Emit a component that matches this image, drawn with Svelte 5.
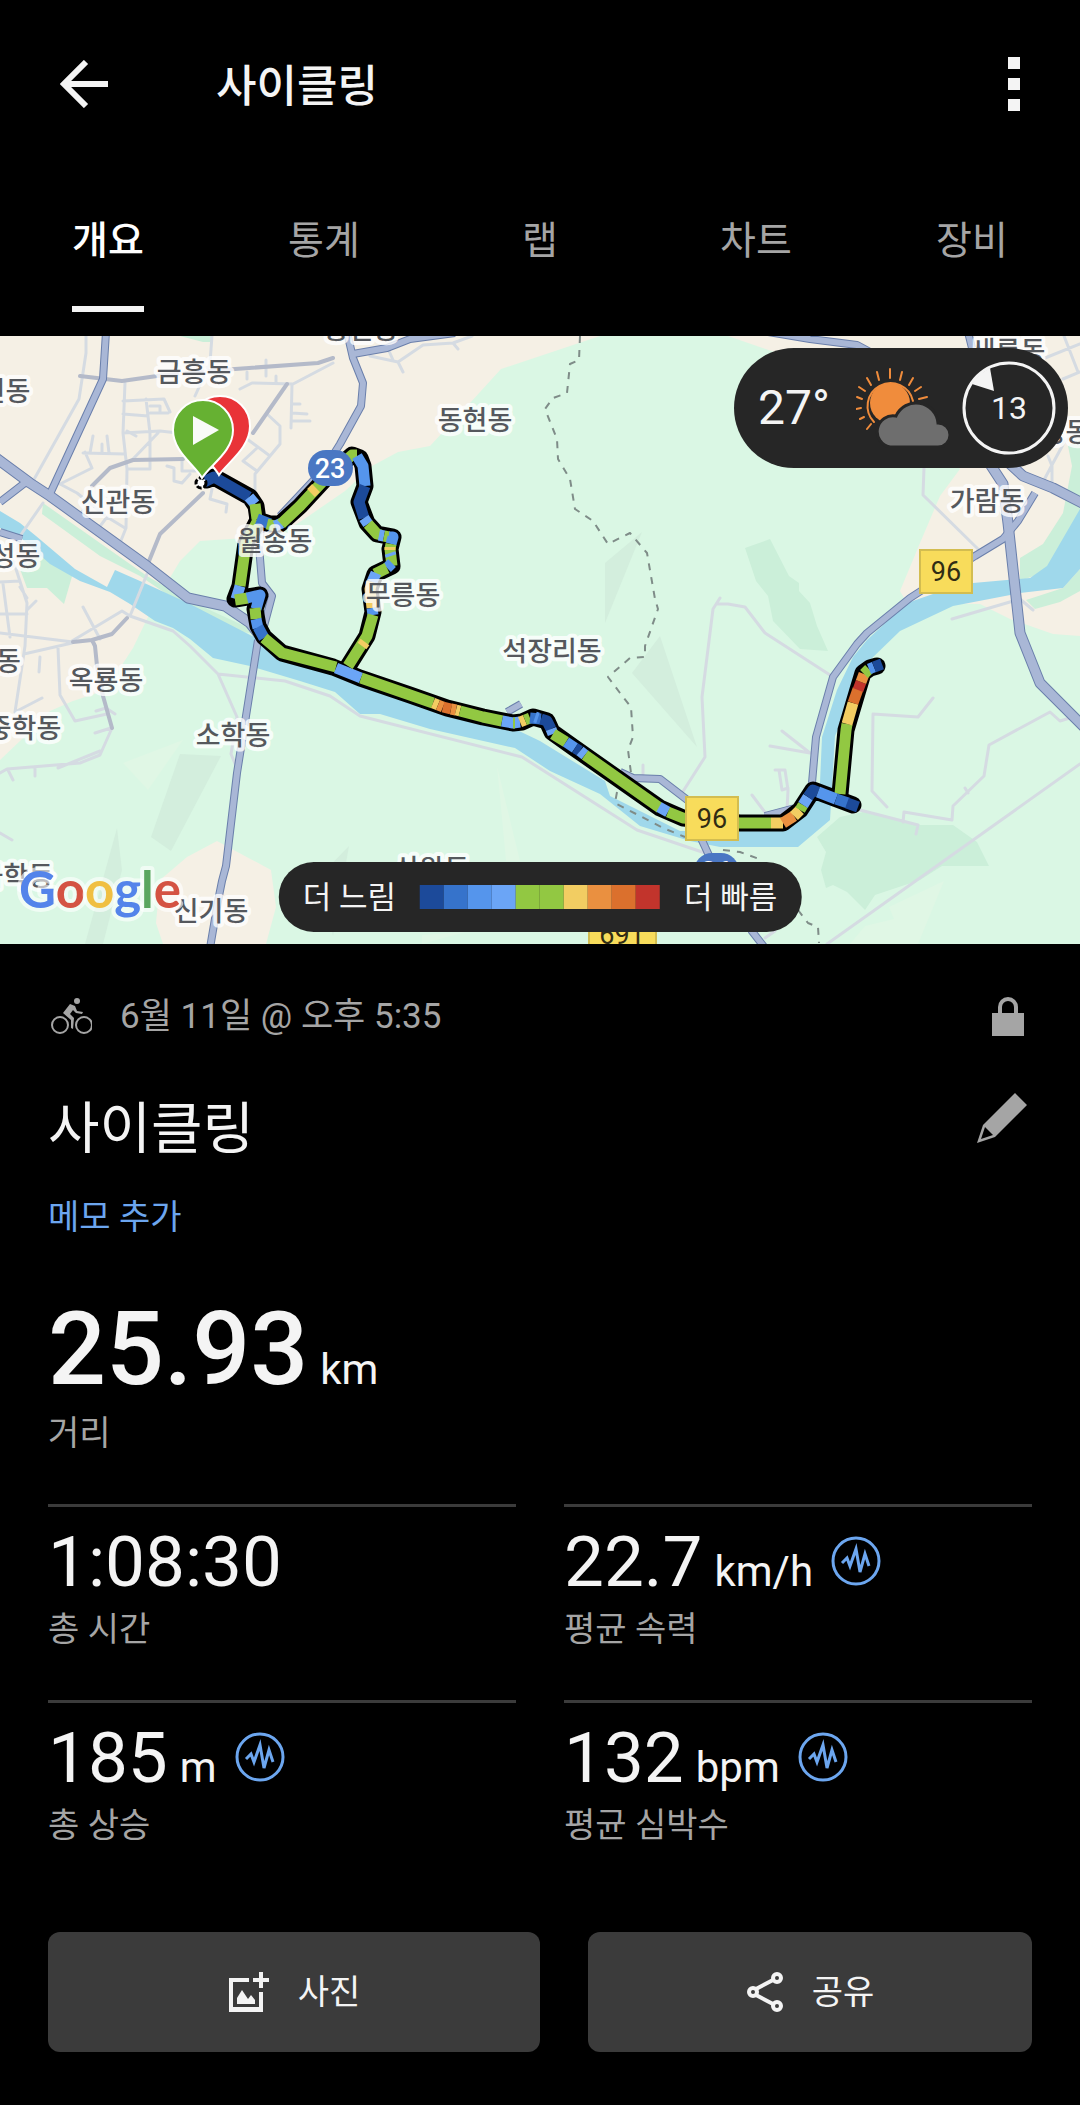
<script lang="ts">
  type Segment = { color: string; d: string };
  type Place = { name: string; x: number; y: number };
  type Stat = { value: string; unit: string; label: string; insight: boolean };

  const tabs = ["개요", "통계", "랩", "차트", "장비"];
  let activeTab = $state("개요");

  const navy = "#1c4a9a";
  const blue = "#3673cb";
  const sky = "#5595ec";
  const light = "#6ba5f6";
  const green = "#92c842";
  const yellow = "#f2cd62";
  const orange = "#ea9040";
  const rust = "#db702d";
  const red = "#c2342c";

  const paceScale = [navy, blue, sky, light, green, green, yellow, orange, rust, red];

  const routeLines = [
    "M207 144 L214 141 L250 161 L256 170 L258 184 L270 188 L280 188 L300 170 L325 143 L352 119 L360 122 L363 130 L365 150 L359 166 L367 187 L377 198 L393 201 L390 213 L392 230 L375 238 L370 253 L373 276 L367 300 L347 332",
    "M258 184 L246 207 L240 250 L235 263 L260 259 L255 273 L258 290 L264 301 L282 317 L333 331 L360 342 L410 359 L447 372 L483 381 L513 387 L522 386 L533 381 L547 385 L552 396 L573 411 L660 472 L683 482 L740 487 L783 487 L800 474 L813 454 L853 469",
    "M840 458 L846 394 L857 357 L863 337 L870 332 L877 330",
  ];

  const segments: Segment[] = [
    { color: green, d: "M258 184 L246 207 L240 250" },
    { color: light, d: "M240 250 L236 263" },
    { color: green, d: "M235 264 L248 262" },
    { color: sky, d: "M247 262 L260 259 L256 273" },
    { color: green, d: "M255 272 L256 283" },
    { color: sky, d: "M256 283 L258 292" },
    { color: blue, d: "M258 291 L264 302" },
    { color: green, d: "M264 302 L282 317 L336 331" },
    { color: light, d: "M336 332 L361 342" },
    { color: green, d: "M361 342 L410 359 L433 367" },
    { color: yellow, d: "M433 367 L438 369" },
    { color: orange, d: "M438 369 L443 371" },
    { color: rust, d: "M443 371 L451 373" },
    { color: orange, d: "M451 373 L456 374" },
    { color: yellow, d: "M456 374 L460 375" },
    { color: green, d: "M460 375 L483 381 L502 385" },
    { color: light, d: "M502 385 L513 387 L520 386" },
    { color: green, d: "M513 387 L515 387" },
    { color: yellow, d: "M520 386 L525 384" },
    { color: green, d: "M525 384 L530 382" },
    { color: blue, d: "M530 382 L541 383" },
    { color: sky, d: "M535 381 L538 382" },
    { color: navy, d: "M541 383 L547 385 L551 393" },
    { color: light, d: "M551 393 L553 398" },
    { color: green, d: "M553 398 L566 406" },
    { color: sky, d: "M566 406 L575 412" },
    { color: navy, d: "M575 412 L580 415" },
    { color: light, d: "M580 415 L585 419" },
    { color: green, d: "M585 419 L660 472" },
    { color: light, d: "M659 471 L668 476" },
    { color: green, d: "M668 476 L683 482 L740 487 L771 487" },
    { color: yellow, d: "M771 487 L783 487" },
    { color: orange, d: "M783 487 L794 480" },
    { color: yellow, d: "M794 480 L800 474" },
    { color: green, d: "M800 474 L803 469" },
    { color: light, d: "M803 469 L808 461" },
    { color: navy, d: "M808 461 L813 454 L818 456" },
    { color: green, d: "M840 458 L846 394 L847 388" },
    { color: yellow, d: "M847 388 L853 367" },
    { color: rust, d: "M853 367 L858 353" },
    { color: red, d: "M858 354 L861 346" },
    { color: orange, d: "M861 346 L864 338" },
    { color: green, d: "M864 338 L869 333" },
    { color: sky, d: "M869 333 L874 331" },
    { color: navy, d: "M874 331 L882 328" },
    { color: sky, d: "M818 456 L836 463" },
    { color: blue, d: "M836 463 L848 467" },
    { color: navy, d: "M847 467 L858 471" },
    { color: navy, d: "M204 146 L214 141 L249 161" },
    { color: light, d: "M249 161 L255 168" },
    { color: green, d: "M255 168 L257 183" },
    { color: blue, d: "M257 183 L270 188" },
    { color: green, d: "M267 188 L275 190" },
    { color: light, d: "M275 190 L282 187" },
    { color: green, d: "M281 188 L300 170 L325 143 L352 119 L357 119" },
    { color: yellow, d: "M311 157 L316 152" },
    { color: sky, d: "M357 120 L363 130 L365 150" },
    { color: navy, d: "M365 150 L359 166 L364 182" },
    { color: light, d: "M364 182 L368 188" },
    { color: green, d: "M368 188 L377 198 L381 199" },
    { color: light, d: "M379 199 L384 200" },
    { color: green, d: "M384 200 L389 201" },
    { color: sky, d: "M389 201 L393 201 L391 208" },
    { color: green, d: "M391 208 L390 213 L392 230" },
    { color: yellow, d: "M390 211 L390 214" },
    { color: light, d: "M390 217 L391 220" },
    { color: sky, d: "M392 227 L387 232" },
    { color: green, d: "M387 232 L375 238" },
    { color: light, d: "M376 237 L372 246" },
    { color: yellow, d: "M372 246 L370 253 L372 272" },
    { color: sky, d: "M372 272 L373 279" },
    { color: green, d: "M373 279 L367 300 L348 330" },
    { color: yellow, d: "M365 306 L362 310" },
  ];

  const places: Place[] = [
    { name: "금흥동", x: 194, y: 46 },
    { name: "쌍신동", x: -7, y: 65 },
    { name: "신관동", x: 118, y: 176 },
    { name: "산성동", x: 3, y: 230 },
    { name: "월송동", x: 275, y: 215 },
    { name: "송선동", x: 361, y: 3 },
    { name: "동현동", x: 475, y: 94 },
    { name: "무릉동", x: 403, y: 269 },
    { name: "석장리동", x: 552, y: 325 },
    { name: "새롬동", x: 1008, y: 25 },
    { name: "나성동", x: 1053, y: 106 },
    { name: "가람동", x: 987, y: 175 },
    { name: "교동", x: -4, y: 335 },
    { name: "옥룡동", x: 106, y: 354 },
    { name: "중학동", x: 24, y: 402 },
    { name: "소학동", x: 233, y: 409 },
    { name: "금학동", x: 16, y: 550 },
    { name: "신기동", x: 211, y: 585 },
    { name: "상왕동", x: 432, y: 543 },
  ];

  const minorRoads =
    "M86 0V17L79 63L32 147M43 167L20 200L13 230M125 47L123 97L127 133L126 192L120 207" +
    "M212 0L210 27L195 60M123 65L164 63L170 76M150 77H168M123 78L148 80M146 63L150 97V133L127 133" +
    "M123 97L160 95L178 97M158 97L133 123M127 95L136 100M150 70H160V77M93 100L90 117H83L125 118" +
    "M102 108V117M107 100L109 117M85 116L92 132L60 148L77 157L107 181L98 193M107 181L125 192" +
    "M88 170L77 180M240 53L252 47L293 48L333 27M292 48L291 92M292 68H300M292 77L307 78M291 85H310" +
    "M247 36V43M266 24V40M276 40V47M267 78L280 90V108L255 138V155M247 103L270 120M257 112L243 125L257 135" +
    "M212 153L210 163L227 168L226 176M167 130L174 132V145L182 147L190 138M182 123V135H195" +
    "M147 238L130 280L122 275L72 305M130 280L173 295L190 310L218 338L285 345L330 360L360 380L522 421L637 494L708 518" +
    "M83 271L100 303M15 230L27 267L25 310L15 376L42 362M0 297L73 306M0 278H27M0 246L20 245M3 248L10 301" +
    "M27 274L36 265M20 251L27 262M24 318L72 307M58 312L60 359L75 385L107 378M96 375L106 372L115 378M95 397L111 392" +
    "M112 392L100 419L80 427L7 433L0 437M58 432L100 415M8 434L13 444M35 432V440M40 321L39 336M0 497L12 504" +
    "M218 338L237 381L231 418L236 430M370 20L398 26L423 9L453 7L472 0M453 7L458 13M398 26L403 36M389 15L393 24" +
    "M720 262L713 273L702 361L705 421L682 457M643 429V441M718 268H728L745 271L765 297L830 339" +
    "M924 132L923 159L978 213M1045 22L1080 8M1064 0L1078 36M1063 43L1080 36M1080 95L1065 105L1053 127L1043 146" +
    "M1048 120L1052 130V150M952 283L1020 263L1033 274M782 395L810 417L770 410M775 434H785L788 454L787 474" +
    "M779 434L782 454L788 452M752 459L767 479M933 362L918 381L873 378L872 455L887 471" +
    "M860 474L918 489L916 498M903 486L904 476L952 484L953 470L984 440L989 409L1050 376L1060 385L1073 381" +
    "M965 452L968 457M1080 428L827 608M765 602L775 595";

  const streets =
    "M80 40L122 45L157 40L235 33L318 27L333 22M92 150L110 132L133 124L183 123M203 157L160 198L147 230" +
    "M287 48L253 97M127 282L112 298L92 304L95 310L97 330L103 360L112 392M73 306L92 304";

  const highways =
    "M106 -4L103 43L49 160M0 166L30 143M0 196L22 203M353 18L387 12L410 3L455 -3" +
    "M347 -4L353 22L363 47L361 70L340 108L325 132L280 180M261 190L259 210L262 247L272 260L264 290" +
    "M258 304L237 437L226 530L222 545L218 565L210 612" +
    "M812 447L816 401L833 341L857 308L867 297L910 262L975 220L1003 203L1018 185L1035 157" +
    "M768 -4L810 3L857 9L870 16M968 -4L972 12M507 376L521 368M620 436L633 442L660 443L690 466" +
    "M700 500L712 526M751 594L765 612M765 480L795 472";

  const trunkRoads =
    "M-4 122L30 147L50 160L147 230L188 262L225 270L250 287L264 305" +
    "M990 128L1003 148L1008 187L1013 233L1020 297L1040 347L1084 391M1010 128L1023 140L1053 152L1084 168";

  const boundary =
    "M580 0L579 24L570 28L567 57L553 62L545 73L557 103L558 123L570 143L575 173L593 185L608 208L630 197" +
    "L647 217L655 263L658 273L645 310V321L630 322L608 341L620 357L631 371L633 401L628 414L631 437" +
    "M617 456L615 467L663 492L685 501M723 514L740 516L762 524M798 574L808 587L818 591L819 607";

  const stats: Stat[] = [
    { value: "1:08:30", unit: "", label: "총 시간", insight: false },
    { value: "22.7", unit: "km/h", label: "평균 속력", insight: true },
    { value: "185", unit: "m", label: "총 상승", insight: true },
    { value: "132", unit: "bpm", label: "평균 심박수", insight: true },
  ];
</script>

<main class="activity">
  <header class="app-bar">
    <button class="icon-btn" aria-label="뒤로">
      <svg width="48" height="48" viewBox="0 0 48 48" fill="none" stroke="#f4f4f4" stroke-width="6">
        <path d="M26 2 4 24l22 22M4 24h44" />
      </svg>
    </button>
    <h1>사이클링</h1>
    <button class="icon-btn menu-btn" aria-label="메뉴">
      <svg width="12" height="54" viewBox="0 0 12 54" fill="#f4f4f4">
        <path d="M0 0h12v12H0zM0 21h12v12H0zM0 42h12v12H0z" />
      </svg>
    </button>
  </header>

  <nav class="tabs">
    {#each tabs as tab}
      <button class="tab" class:active={tab === activeTab} onclick={() => (activeTab = tab)}>
        <span>{tab}</span>
      </button>
    {/each}
  </nav>

  <section class="map">
    <svg class="map-canvas" viewBox="0 0 1080 608" preserveAspectRatio="xMidYMid slice">
      <rect width="1080" height="608" fill="#daf7e4" />

      <!-- built-up land -->
      <g fill="#f5f0e5">
        <path d="M0 0H600L501 33L470 67L430 110L398 116L372 130L345 155L300 186L275 200L200 205L180 225L168 245L160 262L147 283L133 312L118 335L100 356L73 365L50 375L20 405L0 424Z" />
        <path d="M728 0L780 18L900 60L960 133L940 160L920 207L900 255L907 267L980 268L1010 283L1053 298L1080 300V0Z" />
        <path d="M217 505L271 534L276 571L266 608H163L156 587L160 544L187 521Z" />
      </g>

      <!-- parks and hills -->
      <g fill="#cbefd9">
        <path d="M43 167L147 240L190 265L262 298L240 296L165 257L140 240L100 220L42 178Z" />
        <path d="M20 233L43 217L73 237L64 268L47 252H27Z" />
        <path d="M745 212L770 203L789 240L799 247V255L810 267L817 290L828 315L800 313L773 285L768 260L756 245Z" />
        <path d="M817 501L840 481L863 476L920 489H953L977 506L989 530H942L920 544L875 559L865 574L847 556L833 549L826 552L821 534L826 516Z" />
        <path d="M1080 103L1068 110L1072 130L1063 177L1043 208L1020 222V245L1047 235L1080 180Z" />
        <path d="M1080 233L1063 252L1026 264L1035 273L1060 266L1080 255Z" />
        <path d="M180 0H211V6H203Z" />
      </g>
      <g fill="#d3eedd">
        <path d="M180 418L221 420L171 515L151 501Z" />
        <path d="M117 492L122 534L103 608H85Z" />
        <path d="M605 227L642 196L605 287Z" />
        <path d="M660 300L632 337L697 411Z" />
        <path d="M349 510L320 540L333 600Z" />
      </g>
      <g fill="#e0f7e5">
        <path d="M123 427L183 404L148 454Z" />
        <path d="M497 430L520 525H506Z" />
        <path d="M944 545L889 571L894 583L865 590L850 608H918Z" />
        <path d="M422 599L465 596L422 608Z" />
      </g>

      <!-- river -->
      <path
        fill="#9fd8eb"
        d="M0 175L20 187L36 200L75 233L107 251L115 234L140 245L190 268L252 300L360 345L450 375L517 394L540 405L605 445L610 460L650 480L680 495H760L800 478L820 447L822 401L837 354L853 321L867 304L907 267L933 258L973 247L1030 242L1047 230L1080 173V233L1063 252L1020 257L953 270L900 295L867 327L835 400L830 484L798 511H720L690 505L640 490L600 458L550 435L515 412L430 393L380 378H360L335 356L300 345L250 330L213 322L190 303L173 292L155 285L130 268L110 256L80 245L50 228L22 203L0 192Z"
      />

      <g fill="none" stroke-linejoin="round">
        <path d={minorRoads} stroke="#d5dbe2" stroke-width="3" stroke-linecap="round" />
        <path d={streets} stroke="#b4bac9" stroke-width="4" stroke-linecap="round" />
        <path d={highways} stroke="#6a7fab" stroke-width="8" />
        <path d={trunkRoads} stroke="#6a7fab" stroke-width="11" />
        <path d={highways} stroke="#a9b7d6" stroke-width="6" />
        <path d={trunkRoads} stroke="#a9b7d6" stroke-width="9" />
        <path d={boundary} stroke="#7f8c88" stroke-width="2" stroke-dasharray="7 7" />
      </g>

      <!-- recorded track -->
      <g fill="none" stroke-linejoin="round">
        {#each routeLines as d}
          <path {d} stroke="#000000" stroke-width="17" stroke-linecap="round" />
        {/each}
        {#each segments as segment}
          <path d={segment.d} stroke={segment.color} stroke-width="11" />
        {/each}
      </g>

      <g class="place-names">
        {#each places as place}
          <text x={place.x} y={place.y}>{place.name}</text>
        {/each}
      </g>

      <g class="shield-blue">
        <rect x="308" y="114" width="45" height="36" rx="18" />
        <text x="330" y="142">23</text>
        <rect x="694" y="517" width="45" height="36" rx="18" />
        <text x="716" y="545">36</text>
      </g>
      <g class="shield-yellow">
        <rect x="920" y="214" width="52" height="43" />
        <text x="946" y="245">96</text>
        <rect x="686" y="461" width="52" height="43" />
        <text x="712" y="492">96</text>
        <rect x="589" y="577" width="67" height="43" />
        <text x="622" y="608">691</text>
      </g>

      <!-- finish and start pins -->
      <circle cx="201" cy="147" r="5" fill="#ffffff" stroke="#000000" stroke-width="3" stroke-dasharray="5 2" />
      <g stroke="#ffffff" stroke-width="2">
        <path fill="#e93338" d="M219 139C212 126 190 112 190 90A30 30 0 0 1 250 90C250 112 228 126 219 139Z" />
        <path fill="#66b132" d="M202 142C195 129 173 116 173 94A30 30 0 0 1 233 94C233 116 210 129 202 142Z" />
      </g>
      <path fill="#f8fbf8" d="M193 80L219 94L193 109Z" />

      <text class="google" x="19" y="572">
        <tspan fill="#5484ea">G</tspan><tspan fill="#d45343">o</tspan><tspan fill="#f0bf42">o</tspan><tspan fill="#5484ea">g</tspan><tspan fill="#5aa65f">l</tspan><tspan fill="#d45343">e</tspan>
      </text>
    </svg>

    <div class="weather">
      <span class="temperature">27°</span>
      <svg width="94" height="80" viewBox="0 0 94 80" fill="none">
        <g stroke="#f08c3c" stroke-width="2" stroke-linecap="round">
          <path d="M34 10V1M44 12L46 4M23 12L21 4M53 17L57 10M15 17L11 10M59 23L65 19M9 23L3 19M63 31L71 29M6 31L1 29M5 40L0 41M8 49L4 51M15 56L11 61" />
          <path d="M18 54A23 23 0 1 1 57 33" />
        </g>
        <circle cx="34" cy="35" r="20" fill="#f08c3c" />
        <path
          fill="#6e6e6e"
          stroke="#262626"
          stroke-width="3"
          d="M34 79A15.500 15.500 0 1 1 40 48A22 22 0 0 1 82 55A12 12 0 0 1 82 79Z"
        />
      </svg>
      <div class="wind">
        <svg width="94" height="94" viewBox="0 0 94 94">
          <circle cx="47" cy="47" r="45" fill="none" stroke="#f4f4f4" stroke-width="3" />
          <path d="M10 23A46 46 0 0 1 28 7L32 30Z" fill="#f4f4f4" />
        </svg>
        <span>13</span>
      </div>
    </div>

    <div class="legend">
      <span>더 느림</span>
      <div class="pace-scale">
        {#each paceScale as color}
          <i style:background={color}></i>
        {/each}
      </div>
      <span>더 빠름</span>
    </div>
  </section>

  <section class="details">
    <div class="meta">
      <svg width="44" height="40" viewBox="0 0 44 40" fill="none" stroke="#a5a5a5">
        <g stroke-width="2">
          <circle cx="12" cy="29" r="8" />
          <circle cx="36" cy="29" r="8" />
        </g>
        <circle cx="29" cy="5" r="3" fill="#a5a5a5" stroke="none" />
        <path
          fill="#a5a5a5"
          stroke="none"
          d="M22 8 27 10 29 15 35 16 34 18 28 17 25 14 22 18 26 22 25 33 23 32 23 24 15 17Z"
        />
      </svg>
      <time>6월 11일 @ 오후 5:35</time>
      <button class="icon-btn" aria-label="비공개">
        <svg width="32" height="40" viewBox="0 0 32 40">
          <path d="M8 19V11a8 8 0 0 1 16 0v8" fill="none" stroke="#a5a5a5" stroke-width="4" />
          <path d="M0 17h32v23H0z" fill="#a5a5a5" />
        </svg>
      </button>
    </div>

    <div class="title-row">
      <h2>사이클링</h2>
      <button class="icon-btn" aria-label="이름 편집">
        <svg width="50" height="50" viewBox="0 0 50 50" fill="#a5a5a5">
          <path fill-rule="evenodd" d="M38 0 50 12 18 44 0 50 6 32ZM8 34 4 46 16 42Z" />
        </svg>
      </button>
    </div>

    <a class="memo" href="#memo">메모 추가</a>

    <div class="distance">
      <div class="reading">
        <strong>25.93</strong>
        <span class="unit">km</span>
      </div>
      <p class="label">거리</p>
    </div>

    <div class="stats">
      {#each stats as stat}
        <div class="stat">
          <div class="reading">
            <span class="value">{stat.value}</span>
            {#if stat.unit}
              <span class="unit">{stat.unit}</span>
            {/if}
            {#if stat.insight}
              <button class="icon-btn insight" aria-label="{stat.label} 상세">
                <svg width="50" height="50" viewBox="0 0 50 50" fill="none" stroke="#6ca6ef">
                  <circle cx="25" cy="25" r="23" stroke-width="3" />
                  <path d="M11 27 16 22 19 30 25 13 29 36 34 18 38 30" stroke-width="3" />
                </svg>
              </button>
            {/if}
          </div>
          <p class="label">{stat.label}</p>
        </div>
      {/each}
    </div>

    <div class="actions">
      <button class="action">
        <svg width="42" height="42" viewBox="0 0 42 42" fill="#f4f4f4">
          <path d="M1 7h20v4H5v25h26V21h4v20H1z" />
          <path d="M31 1h4v6h6v4h-6v6h-4v-6h-6V7h6z" />
          <path d="M9 33V27l5-8 6 9 3-4 4 5v4z" />
        </svg>
        사진
      </button>
      <button class="action">
        <svg width="38" height="42" viewBox="0 0 38 42" fill="none" stroke="#f4f4f4" stroke-width="4">
          <path d="M10 18 27 9M10 24 27 33" />
          <circle cx="31" cy="7" r="4" />
          <circle cx="7" cy="21" r="4" />
          <circle cx="31" cy="35" r="4" />
        </svg>
        공유
      </button>
    </div>
  </section>
</main>

<style>
  :global(body) {
    margin: 0;
    background: #000000;
  }

  .activity {
    min-height: 100vh;
    background: #000000;
    color: #f4f4f4;
    font-family: Roboto, "Noto Sans CJK KR", sans-serif;
  }

  button {
    border: 0;
    padding: 0;
    background: none;
    color: inherit;
    font-family: inherit;
    cursor: pointer;
  }

  svg {
    display: block;
    flex: none;
  }

  h1,
  h2,
  p {
    margin: 0;
    font-weight: 400;
  }

  .icon-btn {
    flex: none;
  }

  .app-bar {
    display: flex;
    align-items: center;
    height: 168px;
    padding: 0 60px;
  }

  .app-bar h1 {
    flex: 1;
    margin-left: 108px;
    padding-top: 6px;
    font-size: 44px;
    font-weight: 500;
    line-height: 56px;
  }

  .tabs {
    display: grid;
    grid-template-columns: repeat(5, 1fr);
    height: 168px;
  }

  .tab {
    display: flex;
    align-items: flex-start;
    justify-content: center;
    color: #a5a5a5;
    font-size: 39px;
  }

  .tab span {
    padding-top: 8px;
    border-bottom: 6px solid transparent;
    line-height: 130px;
  }

  .tab.active {
    color: #ffffff;
    font-weight: 500;
  }

  .tab.active span {
    border-bottom-color: #f4f4f4;
  }

  .map {
    position: relative;
    height: 608px;
    overflow: hidden;
  }

  .map-canvas {
    width: 100%;
    height: 100%;
  }

  .map-canvas text {
    text-anchor: middle;
  }

  .place-names {
    fill: #55585d;
    stroke: rgba(255, 255, 255, 0.8);
    stroke-width: 8px;
    stroke-linejoin: round;
    paint-order: stroke;
    font-size: 27px;
    font-weight: 500;
  }

  .shield-blue rect {
    fill: #4a77c3;
  }

  .shield-blue text {
    fill: #ffffff;
    font-size: 27px;
    font-weight: 500;
  }

  .shield-yellow rect {
    fill: #f8dc5b;
    stroke: #d3bd50;
    stroke-width: 2px;
  }

  .shield-yellow text {
    fill: #302c14;
    font-size: 27px;
  }

  .map-canvas .google {
    stroke: rgba(255, 255, 255, 0.6);
    stroke-width: 8px;
    stroke-linejoin: round;
    paint-order: stroke;
    text-anchor: start;
    font-family: Lato, sans-serif;
    font-size: 51px;
    font-weight: 700;
  }

  .weather {
    position: absolute;
    top: 12px;
    right: 12px;
    display: flex;
    align-items: center;
    gap: 12px;
    height: 120px;
    padding: 0 12px 0 24px;
    box-sizing: border-box;
    border-radius: 60px;
    background: #262626;
  }

  .temperature {
    margin-right: 14px;
    font-size: 48px;
    line-height: 56px;
  }

  .wind {
    display: grid;
    place-items: center;
  }

  .wind svg,
  .wind span {
    grid-area: 1 / 1;
  }

  .wind span {
    font-size: 32px;
    line-height: 40px;
  }

  .legend {
    position: absolute;
    bottom: 12px;
    left: 50%;
    display: flex;
    align-items: center;
    gap: 24px;
    height: 70px;
    padding: 0 24px;
    border-radius: 35px;
    background: #262626;
    font-size: 31px;
    line-height: 40px;
    white-space: nowrap;
    transform: translateX(-50%);
  }

  .legend span {
    padding-top: 2px;
  }

  .pace-scale {
    display: flex;
  }

  .pace-scale i {
    width: 24px;
    height: 24px;
  }

  .details {
    padding: 48px 48px 53px;
  }

  .meta {
    display: flex;
    align-items: center;
    height: 48px;
    padding-right: 8px;
    color: #a5a5a5;
    font-size: 35px;
    line-height: 48px;
  }

  .meta time {
    flex: 1;
    margin-left: 28px;
    padding-top: 2px;
  }

  .title-row {
    display: flex;
    align-items: flex-start;
    justify-content: space-between;
    margin-top: 53px;
    padding-right: 5px;
  }

  .title-row h2 {
    padding-top: 4px;
    font-size: 56px;
    line-height: 64px;
  }

  .memo {
    display: block;
    width: max-content;
    margin-top: 32px;
    color: #6ca6ef;
    font-size: 34px;
    line-height: 48px;
    text-decoration: none;
  }

  .distance {
    margin-top: 56px;
  }

  .reading {
    display: flex;
    align-items: baseline;
  }

  .reading strong {
    font-size: 102px;
    font-weight: 500;
    line-height: 104px;
  }

  .reading .value {
    font-size: 71px;
    line-height: 80px;
  }

  .reading .unit {
    margin-left: 12px;
    font-size: 42px;
    line-height: 48px;
  }

  .insight {
    margin-left: 18px;
  }

  .label {
    color: #a5a5a5;
    font-size: 34px;
    line-height: 48px;
  }

  .distance .label {
    margin-top: 8px;
  }

  .stats {
    display: grid;
    grid-template-columns: repeat(2, 1fr);
    column-gap: 48px;
    margin-top: 47px;
  }

  .stat {
    padding: 15px 0 47px;
    border-top: 3px solid #3b3b3b;
  }

  .stat .label {
    margin-top: 3px;
  }

  .actions {
    display: grid;
    grid-template-columns: 41fr 37fr;
    gap: 48px;
    margin-top: 36px;
  }

  .action {
    display: flex;
    align-items: center;
    justify-content: center;
    gap: 28px;
    height: 120px;
    border-radius: 12px;
    background: #3b3b3b;
    font-size: 34px;
    line-height: 48px;
  }
</style>
